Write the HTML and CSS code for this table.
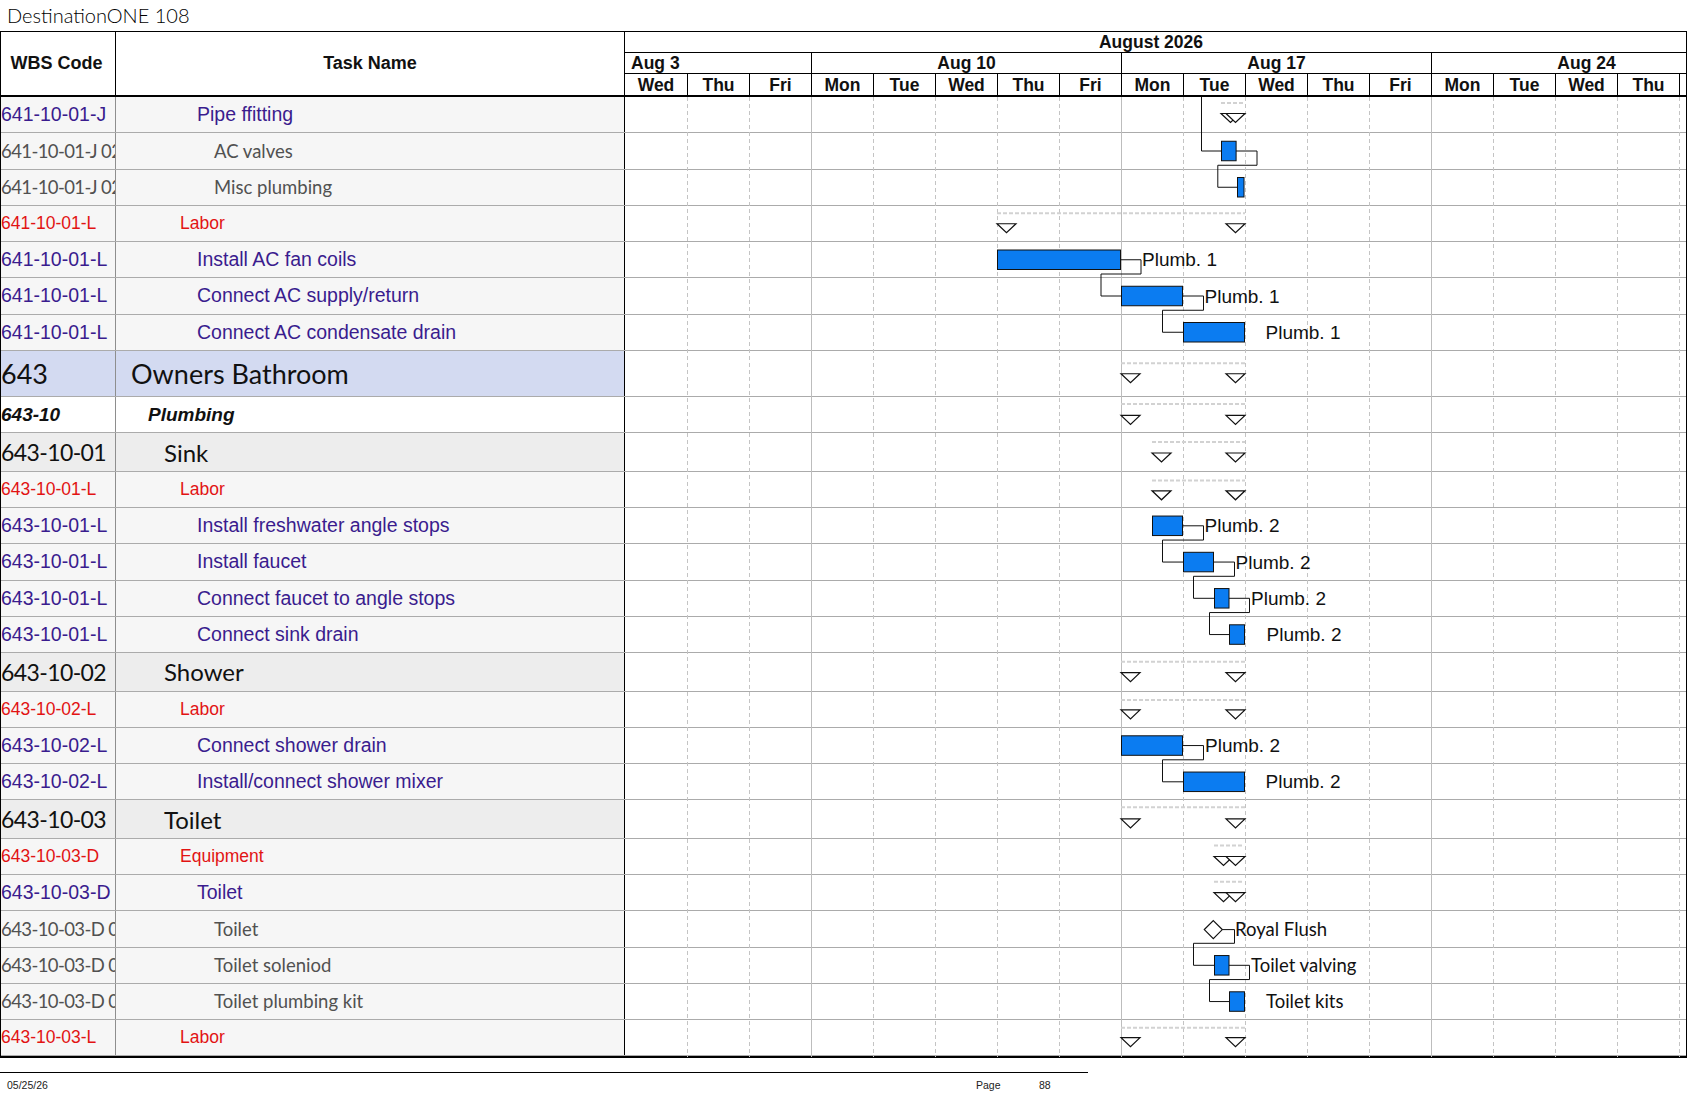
FILE: index.html
```html
<!DOCTYPE html>
<html>
<head>
<meta charset="utf-8">
<title>DestinationONE 108</title>
<link rel="stylesheet" href="styles.css">
</head>
<body>
<div class="title">DestinationONE 108</div>
<div class="sheet">
  <div class="head">
    <div class="h-wbs">WBS Code</div>
    <div class="h-task">Task Name</div>
    <div class="h-gantt">
      <div class="h-month">August 2026</div>
      <div class="h-weeks">
        <div class="wk first">Aug 3</div>
        <div class="wk">Aug 10</div>
        <div class="wk">Aug 17</div>
        <div class="wk">Aug 24</div>
      </div>
      <div class="h-days">
        <div class="day">Wed</div><div class="day">Thu</div><div class="day">Fri</div>
        <div class="day">Mon</div><div class="day">Tue</div><div class="day">Wed</div><div class="day">Thu</div><div class="day">Fri</div>
        <div class="day">Mon</div><div class="day">Tue</div><div class="day">Wed</div><div class="day">Thu</div><div class="day">Fri</div>
        <div class="day">Mon</div><div class="day">Tue</div><div class="day">Wed</div><div class="day">Thu</div><div class="day"></div>
      </div>
    </div>
  </div>
  <div class="body">
    <div class="row r-purple"><div class="wbs">641-10-01-J</div><div class="task i5">Pipe ffitting</div><div class="gc"></div></div>
    <div class="row r-gray"><div class="wbs">641-10-01-J 02</div><div class="task i6">AC valves</div><div class="gc"></div></div>
    <div class="row r-gray"><div class="wbs">641-10-01-J 02</div><div class="task i6">Misc plumbing</div><div class="gc"></div></div>
    <div class="row r-red"><div class="wbs">641-10-01-L</div><div class="task i4">Labor</div><div class="gc"></div></div>
    <div class="row r-purple"><div class="wbs">641-10-01-L</div><div class="task i5">Install AC fan coils</div><div class="gc"></div></div>
    <div class="row r-purple"><div class="wbs">641-10-01-L</div><div class="task i5">Connect AC supply/return</div><div class="gc"></div></div>
    <div class="row r-purple"><div class="wbs">641-10-01-L</div><div class="task i5">Connect AC condensate drain</div><div class="gc"></div></div>
    <div class="row r-top"><div class="wbs">643</div><div class="task i1">Owners Bathroom</div><div class="gc"></div></div>
    <div class="row r-plumb"><div class="wbs">643-10</div><div class="task i2">Plumbing</div><div class="gc"></div></div>
    <div class="row r-grp"><div class="wbs">643-10-01</div><div class="task i3">Sink</div><div class="gc"></div></div>
    <div class="row r-red"><div class="wbs">643-10-01-L</div><div class="task i4">Labor</div><div class="gc"></div></div>
    <div class="row r-purple"><div class="wbs">643-10-01-L</div><div class="task i5">Install freshwater angle stops</div><div class="gc"></div></div>
    <div class="row r-purple"><div class="wbs">643-10-01-L</div><div class="task i5">Install faucet</div><div class="gc"></div></div>
    <div class="row r-purple"><div class="wbs">643-10-01-L</div><div class="task i5">Connect faucet to angle stops</div><div class="gc"></div></div>
    <div class="row r-purple"><div class="wbs">643-10-01-L</div><div class="task i5">Connect sink drain</div><div class="gc"></div></div>
    <div class="row r-grp"><div class="wbs">643-10-02</div><div class="task i3">Shower</div><div class="gc"></div></div>
    <div class="row r-red"><div class="wbs">643-10-02-L</div><div class="task i4">Labor</div><div class="gc"></div></div>
    <div class="row r-purple"><div class="wbs">643-10-02-L</div><div class="task i5">Connect shower drain</div><div class="gc"></div></div>
    <div class="row r-purple"><div class="wbs">643-10-02-L</div><div class="task i5">Install/connect shower mixer</div><div class="gc"></div></div>
    <div class="row r-grp"><div class="wbs">643-10-03</div><div class="task i3">Toilet</div><div class="gc"></div></div>
    <div class="row r-red"><div class="wbs">643-10-03-D</div><div class="task i4">Equipment</div><div class="gc"></div></div>
    <div class="row r-purple"><div class="wbs">643-10-03-D</div><div class="task i5">Toilet</div><div class="gc"></div></div>
    <div class="row r-gray"><div class="wbs">643-10-03-D 01</div><div class="task i6">Toilet</div><div class="gc"></div></div>
    <div class="row r-gray"><div class="wbs">643-10-03-D 02</div><div class="task i6">Toilet soleniod</div><div class="gc"></div></div>
    <div class="row r-gray"><div class="wbs">643-10-03-D 03</div><div class="task i6">Toilet plumbing kit</div><div class="gc"></div></div>
    <div class="row r-red"><div class="wbs">643-10-03-L</div><div class="task i4">Labor</div><div class="gc"></div></div>

    <svg class="chart" width="1061" height="960" viewBox="0 0 1061 960">
      <g class="grid">
        <line class="dash" x1="62.5" y1="0" x2="62.5" y2="960"/>
        <line class="dash" x1="124.5" y1="0" x2="124.5" y2="960"/>
        <line class="week" x1="186.5" y1="0" x2="186.5" y2="960"/>
        <line class="dash" x1="248.5" y1="0" x2="248.5" y2="960"/>
        <line class="dash" x1="310.5" y1="0" x2="310.5" y2="960"/>
        <line class="dash" x1="372.5" y1="0" x2="372.5" y2="960"/>
        <line class="dash" x1="434.5" y1="0" x2="434.5" y2="960"/>
        <line class="week" x1="496.5" y1="0" x2="496.5" y2="960"/>
        <line class="dash" x1="558.5" y1="0" x2="558.5" y2="960"/>
        <line class="dash" x1="620.5" y1="0" x2="620.5" y2="960"/>
        <line class="dash" x1="682.5" y1="0" x2="682.5" y2="960"/>
        <line class="dash" x1="744.5" y1="0" x2="744.5" y2="960"/>
        <line class="week" x1="806.5" y1="0" x2="806.5" y2="960"/>
        <line class="dash" x1="868.5" y1="0" x2="868.5" y2="960"/>
        <line class="dash" x1="930.5" y1="0" x2="930.5" y2="960"/>
        <line class="dash" x1="992.5" y1="0" x2="992.5" y2="960"/>
        <line class="dash" x1="1054.5" y1="0" x2="1054.5" y2="960"/>
      </g>

      <!-- rows 1-10 -->
      <g>
        <line class="sline" x1="596" y1="6" x2="620" y2="6"/>
        <polygon class="tri" points="596,16.5 615,16.5 605.5,25.5"/>
        <polygon class="tri" points="601,16.5 620,16.5 610.5,25.5"/>

        <polyline class="lk" points="576.5,0 576.5,54 596.5,54"/>
        <polyline class="lk" points="611,54 632,54 632,68.25 592.8,68.25 592.8,90.25 612.5,90.25"/>
        <rect class="bar" x="596.5" y="44.25" width="14.6" height="19.5"/>
        <rect class="bar" x="612.5" y="80.5" width="6.5" height="19.5"/>

        <line class="sline" x1="372" y1="116.25" x2="620" y2="116.25"/>
        <polygon class="tri" points="372,126.75 391,126.75 381.5,135.75"/>
        <polygon class="tri" points="601,126.75 620,126.75 610.5,135.75"/>

        <polyline class="lk" points="495.5,162.75 516,162.75 516,177 476,177 476,199 496.5,199"/>
        <polyline class="lk" points="557.5,199 578.5,199 578.5,213.25 537.5,213.25 537.5,235.25 558.5,235.25"/>
        <rect class="bar" x="372.5" y="153" width="123" height="19.5"/>
        <rect class="bar" x="496.5" y="189.25" width="61" height="19.5"/>
        <rect class="bar" x="558.5" y="225.5" width="61" height="19.5"/>
        <text class="lbl" x="517" y="169.25">Plumb. 1</text>
        <text class="lbl" x="579.5" y="205.5">Plumb. 1</text>
        <text class="lbl" x="640.5" y="241.75">Plumb. 1</text>

        <line class="sline" x1="496" y1="266.35" x2="620" y2="266.35"/>
        <polygon class="tri" points="496,276.75 515,276.75 505.5,285.75"/>
        <polygon class="tri" points="601,276.75 620,276.75 610.5,285.75"/>

        <line class="sline" x1="496" y1="307" x2="620" y2="307"/>
        <polygon class="tri" points="496,318.35 515,318.35 505.5,327.35"/>
        <polygon class="tri" points="601,318.35 620,318.35 610.5,327.35"/>

        <line class="sline" x1="527" y1="345" x2="620" y2="345"/>
        <polygon class="tri" points="527,356 546,356 536.5,365"/>
        <polygon class="tri" points="601,356 620,356 610.5,365"/>
      </g>

      <!-- rows 11-16 -->
      <g transform="translate(0 0.7)">
        <line class="sline" x1="527" y1="382.8" x2="620" y2="382.8"/>
        <polygon class="tri" points="527,393.1 546,393.1 536.5,402.1"/>
        <polygon class="tri" points="601,393.1 620,393.1 610.5,402.1"/>

        <polyline class="lk" points="557.5,428.1 578.5,428.1 578.5,442.35 537.5,442.35 537.5,464.35 558.5,464.35"/>
        <polyline class="lk" points="588.5,464.35 609.5,464.35 609.5,478.6 568.5,478.6 568.5,500.6 589.5,500.6"/>
        <polyline class="lk" points="604,500.6 624.5,500.6 624.5,514.85 584.5,514.85 584.5,536.85 604.5,536.85"/>
        <rect class="bar" x="527.5" y="418.35" width="30" height="19.5"/>
        <rect class="bar" x="558.5" y="454.6" width="30" height="19.5"/>
        <rect class="bar" x="589.5" y="490.85" width="14.5" height="19.5"/>
        <rect class="bar" x="604.5" y="527.1" width="15" height="19.5"/>
        <text class="lbl" x="579.5" y="434.6">Plumb. 2</text>
        <text class="lbl" x="610.5" y="470.85">Plumb. 2</text>
        <text class="lbl" x="626" y="507.1">Plumb. 2</text>
        <text class="lbl" x="641.5" y="543.35">Plumb. 2</text>

        <line class="sline" x1="496" y1="564" x2="620" y2="564"/>
        <polygon class="tri" points="496,575 515,575 505.5,584"/>
        <polygon class="tri" points="601,575 620,575 610.5,584"/>
      </g>

      <!-- rows 17-20 -->
      <g transform="translate(0 1.4)">
        <line class="sline" x1="496" y1="601.6" x2="620" y2="601.6"/>
        <polygon class="tri" points="496,611.5 515,611.5 505.5,620.5"/>
        <polygon class="tri" points="601,611.5 620,611.5 610.5,620.5"/>

        <polyline class="lk" points="557.5,647.15 578.5,647.15 578.5,661.4 537.5,661.4 537.5,683.4 558.5,683.4"/>
        <rect class="bar" x="496.5" y="637.4" width="61" height="19.5"/>
        <rect class="bar" x="558.5" y="673.65" width="61" height="19.5"/>
        <text class="lbl" x="580" y="653.65">Plumb. 2</text>
        <text class="lbl" x="640.5" y="689.9">Plumb. 2</text>

        <line class="sline" x1="496" y1="708.8" x2="620" y2="708.8"/>
        <polygon class="tri" points="496,720.5 515,720.5 505.5,729.5"/>
        <polygon class="tri" points="601,720.5 620,720.5 610.5,729.5"/>
      </g>

      <!-- rows 21-26 -->
      <g transform="translate(0 2.1)">
        <line class="sline" x1="589" y1="746.4" x2="618" y2="746.4"/>
        <polygon class="tri" points="589,757.4 608,757.4 598.5,766.4"/>
        <polygon class="tri" points="601,757.4 620,757.4 610.5,766.4"/>

        <line class="sline" x1="589" y1="782.6" x2="618" y2="782.6"/>
        <polygon class="tri" points="589,793.6 608,793.6 598.5,802.6"/>
        <polygon class="tri" points="601,793.6 620,793.6 610.5,802.6"/>

        <polyline class="lk" points="597.3,830.5 609.5,830.5 609.5,844.2 568.5,844.2 568.5,866.2 589.5,866.2"/>
        <polyline class="lk" points="604,866.2 624.5,866.2 624.5,880.45 584.5,880.45 584.5,902.45 604.5,902.45"/>
        <polygon class="ms" points="588.3,821.5 597.3,830.5 588.3,839.5 579.3,830.5"/>
        <rect class="bar" x="589.5" y="856.45" width="14.5" height="19.5"/>
        <rect class="bar" x="604.5" y="892.7" width="15" height="19.5"/>
        <text class="lbl2" x="610" y="836.8">Royal Flush</text>
        <text class="lbl2" x="626" y="872.5">Toilet valving</text>
        <text class="lbl2" x="641" y="908.7">Toilet kits</text>

        <line class="sline" x1="496" y1="928.6" x2="620" y2="928.6"/>
        <polygon class="tri" points="496,938.6 515,938.6 505.5,947.6"/>
        <polygon class="tri" points="601,938.6 620,938.6 610.5,947.6"/>
      </g>
    </svg>
  </div>
</div>
<div class="footer">
  <div>05/25/26</div>
  <div>Page</div>
  <div>88</div>
</div>
</body>
</html>
```

FILE: styles.css
```css
* { box-sizing: border-box; }

body {
  margin: 0;
  background: #fff;
  font-family: "Liberation Sans", Arial, sans-serif;
  color: #111;
}

.title {
  height: 31px;
  padding-left: 7px;
  font-family: Lato, "DejaVu Sans", sans-serif;
  font-weight: 300;
  font-size: 20px;
  line-height: 31px;
  color: #000;
}

.sheet {
  width: 1687px;
  border: 1px solid #000;
  border-bottom-width: 2px;
}

/* ---------- header ---------- */
.head {
  display: flex;
  height: 65px;
  border-bottom: 2px solid #000;
  font-weight: bold;
}

.h-wbs {
  width: 115px;
  border-right: 1px solid #000;
  display: flex;
  align-items: center;
  justify-content: center;
  padding-right: 3px;
  font-size: 18px;
}

.h-task {
  width: 508px;
  display: flex;
  align-items: center;
  justify-content: center;
  font-size: 18px;
}

.h-gantt {
  width: 1062px;
  border-left: 1px solid #000;
  display: flex;
  flex-direction: column;
  font-size: 17.5px;
  overflow: hidden;
}

.h-month {
  height: 21px;
  border-bottom: 1px solid #000;
  line-height: 20px;
  text-align: center;
  padding-right: 9px;
}

.h-weeks {
  height: 21px;
  border-bottom: 1px solid #000;
  display: flex;
  overflow: hidden;
}

.wk {
  flex: none;
  width: 310px;
  border-left: 1px solid #000;
  line-height: 20px;
  text-align: center;
  white-space: nowrap;
}

.wk.first {
  width: 186px;
  border-left: 0;
  text-align: left;
  padding-left: 6px;
}

.h-days {
  height: 21px;
  display: flex;
  overflow: hidden;
}

.day {
  flex: none;
  width: 62px;
  border-left: 1px solid #000;
  line-height: 21px;
  padding-top: 1px;
  text-align: center;
}

.day:first-child { border-left: 0; }

/* ---------- body rows ---------- */
.body { position: relative; }

.row {
  display: flex;
  height: 36.25px;
  border-bottom: 1px solid #ababab;
}

.wbs {
  width: 115px;
  border-right: 1px solid #8e8e8e;
  display: flex;
  align-items: center;
  white-space: nowrap;
  overflow: hidden;
  background: #f6f6f6;
}

.task {
  width: 508px;
  display: flex;
  align-items: center;
  white-space: nowrap;
  overflow: hidden;
  background: #f6f6f6;
}

.gc {
  width: 1062px;
  border-left: 1px solid #000;
  background: #fff;
}

.i1 { padding-left: 15px; }
.i2 { padding-left: 32px; }
.i3 { padding-left: 48px; }
.i4 { padding-left: 64px; }
.i5 { padding-left: 81px; }
.i6 { padding-left: 98px; }

.r-purple .wbs,
.r-purple .task {
  color: #3a1c8e;
  font-size: 19.5px;
}

.r-red .wbs,
.r-red .task {
  color: #e21313;
  font-size: 17.5px;
}

.r-gray .wbs,
.r-gray .task {
  font-family: Lato, "Open Sans", sans-serif;
  font-size: 18.5px;
  color: #515151;
}

.r-gray .wbs { letter-spacing: -0.6px; }

.r-top { height: 46.3px; }
.r-top .wbs,
.r-top .task {
  font-family: Lato, "Open Sans", sans-serif;
  font-size: 27px;
  color: #111;
  background: #d3daf1;
}

.r-plumb .wbs,
.r-plumb .task {
  font-size: 19px;
  font-weight: bold;
  font-style: italic;
  color: #111;
  background: #fff;
}

.r-grp { height: 38.5px; }
.r-grp .wbs,
.r-grp .task {
  font-family: Lato, "Open Sans", sans-serif;
  font-size: 24px;
  color: #111;
  background: #ededed;
}

.r-grp .wbs {
  font-size: 23px;
  letter-spacing: -0.6px;
}

/* ---------- chart overlay ---------- */
.chart {
  position: absolute;
  left: 624px;
  top: 0;
  overflow: visible;
  pointer-events: none;
}

.grid line { stroke-width: 1; }
.grid .dash { stroke: #c4c4c4; stroke-dasharray: 4 3; }
.grid .week { stroke: #bdbdbd; }

.sline {
  stroke: #d2d2d2;
  stroke-width: 2;
  stroke-dasharray: 4 2;
}

.tri {
  fill: #fff;
  stroke: #111;
  stroke-width: 1.2;
}

.lk {
  fill: none;
  stroke: #111;
  stroke-width: 1;
}

.bar {
  fill: #0b7cf1;
  stroke: #111;
  stroke-width: 1;
}

.ms {
  fill: #fff;
  stroke: #111;
  stroke-width: 1.2;
}

.lbl {
  font-family: "Liberation Sans", Arial, sans-serif;
  font-size: 19px;
  fill: #111;
}

.lbl2 {
  font-family: Lato, "Open Sans", sans-serif;
  font-size: 18.5px;
  fill: #111;
}

/* ---------- footer ---------- */
.footer {
  width: 1088px;
  margin-top: 14px;
  border-top: 1.5px solid #000;
  display: grid;
  grid-template-columns: 969px 63px auto;
  padding-left: 7px;
  padding-top: 6px;
  font-size: 10.5px;
  line-height: 12px;
  color: #222;
}
```
